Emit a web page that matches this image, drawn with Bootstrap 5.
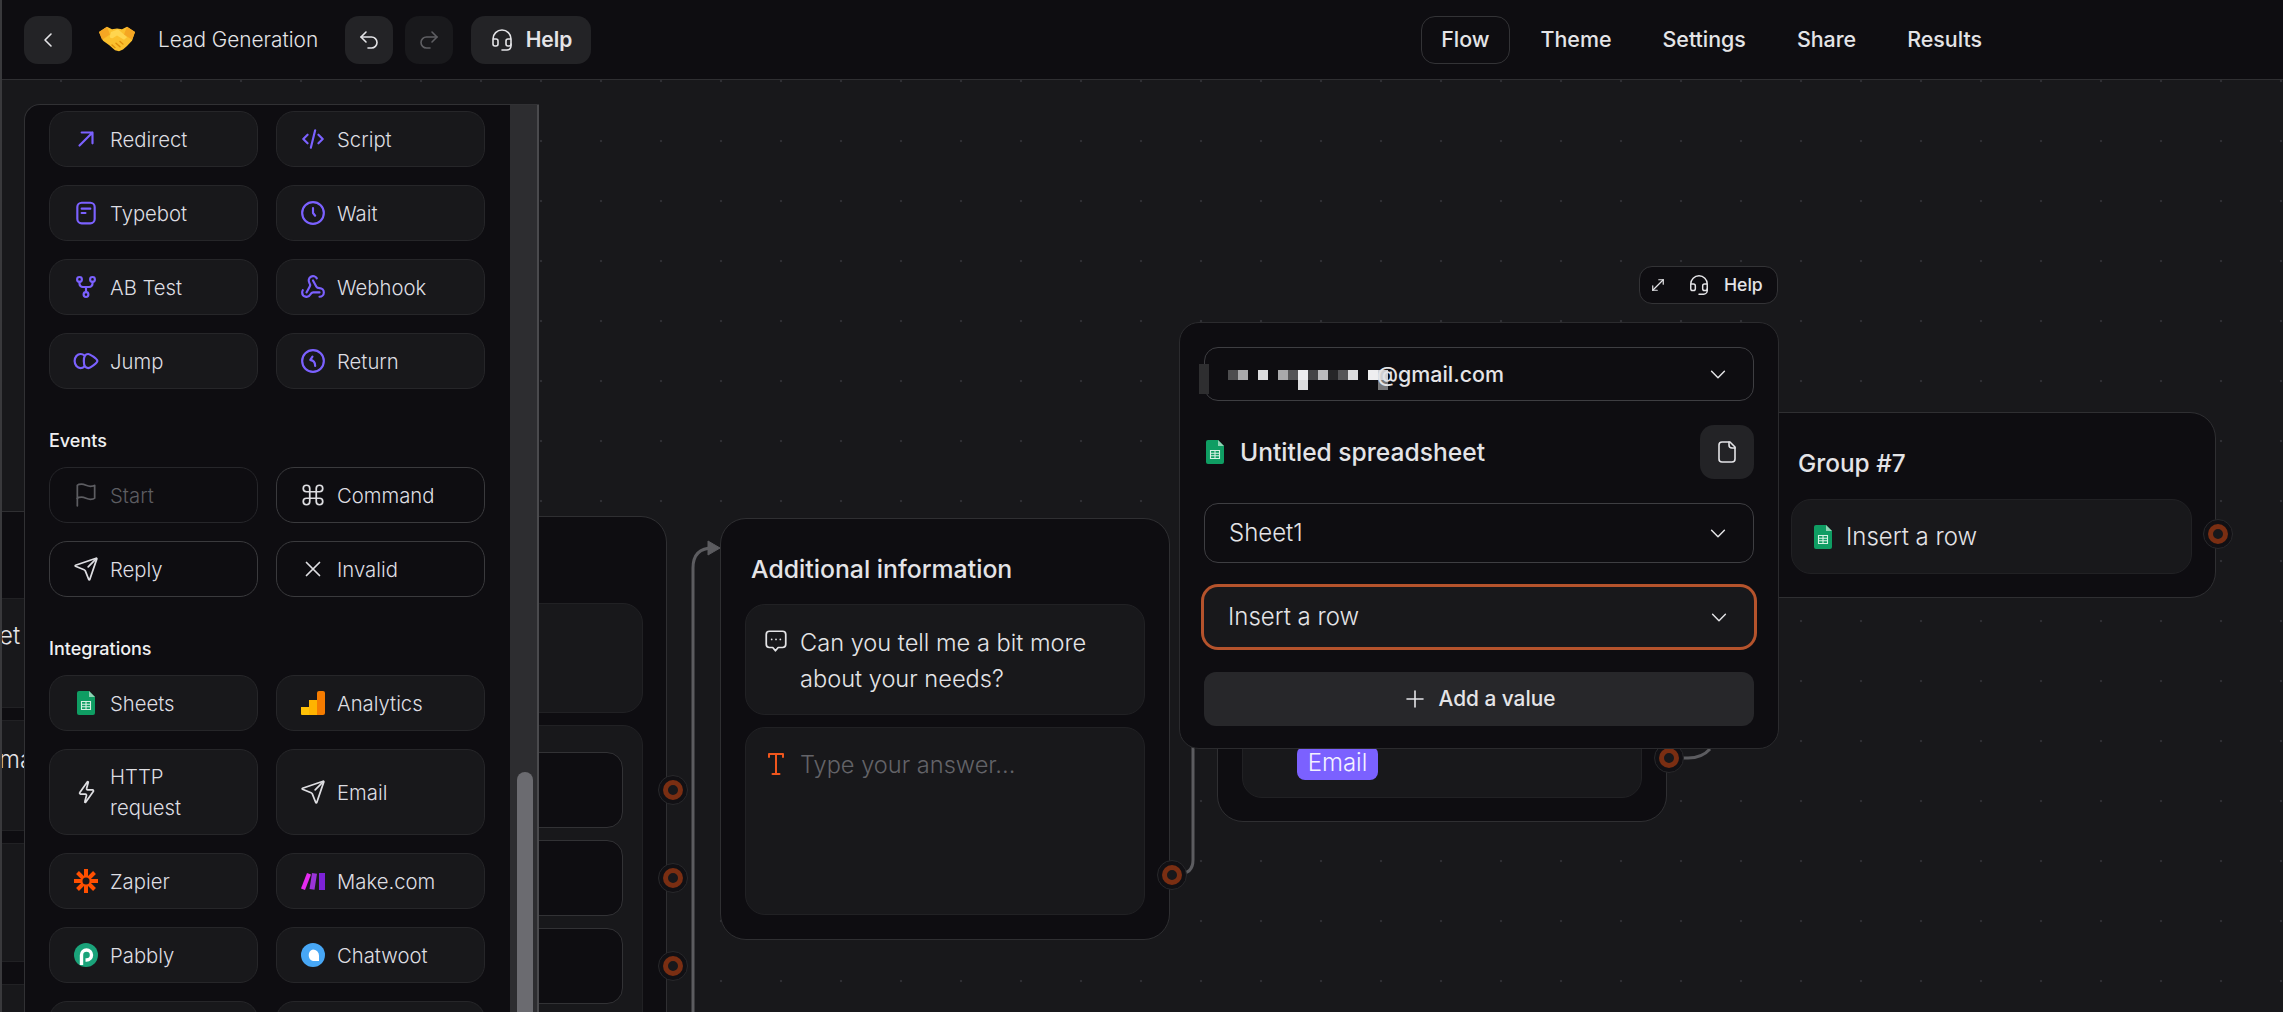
<!DOCTYPE html>
<html lang="en">
<head>
<meta charset="utf-8">
<title>Lead Generation</title>
<link href="https://cdn.jsdelivr.net/npm/bootstrap@5.3.0/dist/css/bootstrap.min.css" rel="stylesheet">
<style>
html,body{height:100%;margin:0;overflow:hidden;background:#18181b}
body{font-family:"Inter","Liberation Sans",sans-serif;color:#e4e4e7;font-size:24px;font-weight:300;line-height:1.5}
.ico{width:24px;height:24px;fill:none;stroke:currentColor;stroke-width:1.6;stroke-linecap:round;stroke-linejoin:round;flex:none}
.pur{color:#7b61ff;stroke-width:2}
.shell{height:1012px;position:relative;overflow:hidden}
.topbar{height:80px;background:#0e0d11;border-bottom:1px solid #2f2f32;padding-left:24px}
.sq-btn{width:48px;height:48px;border-radius:14px;background:#232326;border:0;color:#e4e4e7;display:flex;align-items:center;justify-content:center;padding:0}
.sq-off{background:#19191c;color:#5f5f63}
.emoji{width:38px;height:28px;margin-left:26px;margin-bottom:4px;flex:none}
.ttl{margin-left:22px;margin-right:24px;font-size:20.8px;width:163px;white-space:nowrap}
.gap-a{margin-right:12px}
.help-btn{width:120px;height:48px;border-radius:14px;background:#232326;margin-left:6px;font-weight:600;font-size:21px;gap:12px}
.tabs{margin-left:auto;margin-right:281px;gap:11px}
.tabx{height:48px;padding:0 19px;border-radius:14px;border:1px solid transparent;font-weight:500;font-size:21.4px;display:flex;align-items:center}
.tab-on{border-color:#333336}
.canvas{position:absolute;left:0;right:0;top:80px;bottom:0;background-color:#18181b;background-image:radial-gradient(circle,#2f2f34 1.1px,transparent 1.6px);background-size:60px 60px;background-position:31px -29px}
.strip{position:absolute;left:0;top:-80px;bottom:0;width:2px;background:#39393c;z-index:9}
.wires{position:absolute;left:0;top:0;width:2283px;height:932px}
.grp{position:absolute;background:#0e0d11;border:1px solid #2f2f32;border-radius:26px}
.blk{position:absolute;background:#18181b;border:1px solid #212124;border-radius:20px}
.port{position:absolute;width:30px;height:30px;border-radius:50%;background:#111014;border:1px solid #28282b;display:flex;align-items:center;justify-content:center}
.port::after{content:"";width:20px;height:20px;border-radius:50%;border:5px solid #7a2e12;background:#18181b}
.g-back{left:-40px;top:431px;width:66px;height:600px;overflow:hidden;border-radius:0;border-left:0;border-right:0;border-bottom:0}
.gb1{left:0;top:86px;width:280px;height:110px;border-radius:0}
.gb2{left:0;top:208px;width:280px;height:111px;border-radius:0}
.gb3{left:0;top:331px;width:280px;height:119px;border-radius:0}
.gb4{left:0;top:472px;width:280px;height:120px;border-radius:0}
.clip-t{position:absolute;left:38px;white-space:nowrap;font-size:24px}
.ct1{top:19px}.ct2{top:21px}
.g-main{left:300px;top:436px;width:367px;height:600px}
.gm1{left:-1px;top:86px;width:343px;height:110px}
.gm2{left:-1px;top:208px;width:343px;height:400px}
.it1,.it2,.it3{position:absolute;left:-1px;width:323px;height:76px;background:#0e0d11;border:1px solid #323235;border-radius:16px}
.it1{top:26px}.it2{top:114px}.it3{top:202px}
.port.p1{left:658px;top:695px}.port.p2{left:658px;top:783px}.port.p3{left:658px;top:871px}
.port.p4{left:1157px;top:780px}.port.p5{left:1654px;top:663px}.port.p6{left:2203px;top:439px}
.g-add{left:720px;top:438px;width:450px;height:422px}
.g-h{font-size:24.4px;font-weight:500;white-space:nowrap;line-height:32px}
.g-add .g-h{position:absolute;left:30px;top:34px;font-size:24.8px}
.ga1{left:24px;top:85px;width:400px;height:111px}
.ga2{left:24px;top:208px;width:400px;height:188px}
.ga1 p{position:absolute;left:54px;top:20px;margin:0;font-size:23.6px;line-height:36px;width:330px;white-space:nowrap}
.ga2 p{position:absolute;left:54px;top:19px;margin:0;font-size:23.6px;line-height:36px;color:#636368}
.ic-chat{position:absolute;left:17px;top:23px;width:26px;height:26px}
.ic-t{position:absolute;left:18px;top:23px;width:24px;height:26px;color:#f0561d;stroke-width:2}
.g-mail{left:1217px;top:480px;width:450px;height:262px}
.gm-b{left:24px;top:100px;width:400px;height:137px}
.chip{position:absolute;left:54px;top:84px;width:81px;height:34px;border-radius:8px;background:#7b61ff;color:#f4f1ff;font-size:24px;display:flex;align-items:center;justify-content:center;line-height:1}
.g-seven{left:1700px;top:332px;width:516px;height:186px}
.g-seven .g-h{position:absolute;left:97px;top:34px}
.gs-b{left:90px;top:86px;width:401px;height:75px;display:flex;align-items:center;padding-left:22px;gap:14px;font-size:24px}
.sheet-i{width:18px;height:24px;flex:none}
.pop{position:absolute;left:1179px;top:242px;width:600px;height:427px;background:#0e0d11;border:1px solid #2b2b2e;border-radius:20px;padding:24px 24px 0;z-index:5}
.sel{height:60px;border:1px solid #3e3e42;border-radius:14px;padding:0 24px;margin-bottom:24px;background:#0e0d11;position:relative}
.sel-a{height:54px;font-weight:500;font-size:21.4px}
.sel-b{background:#18181b;border:0;box-shadow:0 0 0 3px #b5532c;margin-bottom:25px}
.chev{width:22px;height:22px;margin-left:auto;margin-right:0}
.pix{position:absolute;left:-6px;top:16px;width:190px;height:30px}
.mail-t{position:absolute;left:172px;top:10px}
.sheet-row{height:54px;margin-bottom:24px}
.sheet-row .sheet-i{margin-left:2px;margin-right:16px}
.sheet-t{font-size:24.6px;font-weight:500}
.doc-btn{width:54px;height:54px;border-radius:14px;background:#232326;margin-left:auto;display:flex;align-items:center;justify-content:center}
.add-v{height:54px;border-radius:12px;background:#27272a;font-weight:500;gap:12px;font-size:20.8px}
.tool{position:absolute;left:1639px;top:186px;width:139px;height:38px;background:#0e0d11;border:1px solid #333336;border-radius:13px;font-size:17.6px;font-weight:500;padding-left:9px;z-index:5}
.tool .ico{width:18px;height:18px}
.tool .hs{width:22px;height:22px;margin-left:21px;margin-right:14px}
.side{position:absolute;left:24px;top:24px;bottom:-2px;width:515px;background:#0e0d11;border:1px solid #313134;border-right:0;border-radius:16px 0 0 0;z-index:6;overflow:hidden;display:flex}
.side-body{width:460px;flex:none;padding:6px 0 0 24px;overflow:hidden}
.btn-grid{--bs-gutter-x:18px;--bs-gutter-y:18px}
.blox{height:56px;background:#18181b;border:1px solid #262629;border-radius:18px;display:flex;align-items:center;padding-left:21px;gap:9px;font-size:20.3px;color:#dedee2;line-height:31px}
.blox .ico{width:26px;height:26px;margin:0 2px}
.blox .logo{width:24px;height:24px;margin:0 3px;flex:none}
.blox .sheet-i{margin:0 6px}
.blox-tall{height:86px}
.blox-line{background:#0e0d11;border-color:#3a3a3d}
.blox-off{background:#0e0d11;color:#5d5d62;border-color:#26262a}
.lbl{font-size:18px;font-weight:500;line-height:24px;margin:40px 0 14px;color:#f0f0f2}
.rail{position:absolute;right:0;top:0;bottom:0;width:29px;background:#2d2d30;border-right:2px solid #4a4a4d}
.thumb{position:absolute;left:7px;top:667px;width:16px;height:400px;border-radius:8px 8px 0 0;background:#6b6b70}
</style>
</head>
<body>
<div class="shell">
  <header class="topbar d-flex align-items-center">
    <button class="sq-btn" type="button" aria-label="Back"><svg class="ico" viewBox="0 0 24 24"><path d="M15 6l-6 6 6 6"/></svg></button>
    <svg class="emoji" viewBox="0 0 38 32" preserveAspectRatio="none"><path d="M1 9 9 3l5 3 5-1 5 1 5-3 8 6-3 10-5 6-4 4-4 2-4-1-6-6-6-5z" fill="#fbc02d"/><path d="M1 9 9 3l3 9-8 6zM37 9 29 3l-3 9 8 6z" fill="#f5a623"/><path d="M13 9l7-3 9 9-3 3-7-5-4 3c-2 1-4-1-3-3z" fill="#ffd54f"/><path d="M14 24l3 3M18 22l4 4M22 20l3 3" stroke="#e08e0b" stroke-width="1.4" fill="none" stroke-linecap="round"/></svg>
    <span class="ttl">Lead Generation</span>
    <button class="sq-btn gap-a" type="button" aria-label="Undo"><svg class="ico" viewBox="0 0 24 24"><path d="M9 14 4 9l5-5"/><path d="M4 9h10.500a5.500 5.500 0 0 1 0 11H11"/></svg></button>
    <button class="sq-btn sq-off gap-a" type="button" aria-label="Redo"><svg class="ico" viewBox="0 0 24 24"><path d="m15 14 5-5-5-5"/><path d="M20 9H9.500a5.500 5.500 0 0 0 0 11H13"/></svg></button>
    <div class="help-btn d-flex align-items-center justify-content-center"><svg class="ico" viewBox="0 0 24 24"><path d="M3 11h3a2 2 0 0 1 2 2v3a2 2 0 0 1-2 2H5a2 2 0 0 1-2-2v-5Zm0 0a9 9 0 1 1 18 0m0 0v5a2 2 0 0 1-2 2h-1a2 2 0 0 1-2-2v-3a2 2 0 0 1 2-2h3Z"/><path d="M21 16v2a4 4 0 0 1-4 4h-5"/></svg><span>Help</span></div>
    <nav class="tabs d-flex">
      <div class="tabx tab-on">Flow</div><div class="tabx">Theme</div><div class="tabx">Settings</div><div class="tabx">Share</div><div class="tabx">Results</div>
    </nav>
  </header>

  <main class="canvas">
    <svg class="wires" viewBox="0 80 2283 932" fill="none" stroke="#5c5c60" stroke-width="3"><path d="M693 1012V568q0-20 20-20h2"/><path d="M708 541l12 7-12 7z" fill="#5c5c60" stroke-width="1"/><path d="M1178 874q15 0 15-14V740"/><path d="M1682 758h6q14 0 22-9"/></svg>

    <div class="grp g-back">
      <div class="blk gb1"><span class="clip-t ct1">et y</span></div>
      <div class="blk gb2"><span class="clip-t ct2">ma</span></div>
      <div class="blk gb3"></div>
      <div class="blk gb4"></div>
    </div>

    <div class="grp g-main">
      <div class="blk gm1"></div>
      <div class="blk gm2"><div class="it1"></div><div class="it2"></div><div class="it3"></div></div>
    </div>
    <div class="port p1"></div><div class="port p2"></div><div class="port p3"></div>

    <div class="grp g-add">
      <div class="g-h">Additional information</div>
      <div class="blk ga1"><svg class="ico ic-chat" viewBox="0 0 24 24"><path d="M6 3h12a3 3 0 0 1 3 3v9a3 3 0 0 1-3 3h-4l-2.500 3-2.500-3H6a3 3 0 0 1-3-3V6a3 3 0 0 1 3-3z"/><path d="M8 10.500h.01M12 10.500h.01M16 10.500h.01"/></svg><p>Can you tell me a bit more<br>about your needs?</p></div>
      <div class="blk ga2"><svg class="ico ic-t" viewBox="0 0 24 26"><path d="M5 6V3h14v3M12 3v20M8.500 23h7"/></svg><p>Type your answer...</p></div>
    </div>
    <div class="port p4"></div>

    <div class="grp g-mail"><div class="blk gm-b"><div class="chip">Email</div></div></div>
    <div class="port p5"></div>

    <div class="grp g-seven">
      <div class="g-h">Group #7</div>
      <div class="blk gs-b"><svg class="sheet-i" viewBox="0 0 18 24"><path d="M2 0h10l6 6v16a2 2 0 0 1-2 2H2a2 2 0 0 1-2-2V2a2 2 0 0 1 2-2z" fill="#0f9d63"/><path d="M12 0l6 6h-6z" fill="#8fd3b4"/><path d="M4.500 10.500h9v8h-9zM4.500 13.200h9M4.500 15.800h9M9 10.500v8" fill="none" stroke="#d6f1e3" stroke-width="1.100"/></svg><span>Insert a row</span></div>
    </div>
    <div class="port p6"></div>

    <div class="tool d-flex align-items-center">
      <svg class="ico" viewBox="0 0 24 24"><path d="M11 19H5v-6"/><path d="M13 5h6v6"/><path d="M19 5 5 19"/></svg>
      <svg class="ico hs" viewBox="0 0 24 24"><path d="M3 11h3a2 2 0 0 1 2 2v3a2 2 0 0 1-2 2H5a2 2 0 0 1-2-2v-5Zm0 0a9 9 0 1 1 18 0m0 0v5a2 2 0 0 1-2 2h-1a2 2 0 0 1-2-2v-3a2 2 0 0 1 2-2h3Z"/><path d="M21 16v2a4 4 0 0 1-4 4h-5"/></svg>
      <span>Help</span>
    </div>

    <section class="pop">
      <div class="sel sel-a d-flex align-items-center">
        <svg class="pix" viewBox="0 0 190 30"><rect x="0" y="0" width="10" height="30" fill="#2e2e30"/><g transform="translate(4)"><rect x="25" y="6" width="10" height="10" fill="#4d4d4f"/><rect x="35" y="6" width="10" height="10" fill="#a9a9ab"/><rect x="55" y="6" width="10" height="10" fill="#dcdcde"/><rect x="75" y="6" width="10" height="10" fill="#a9a9ab"/><rect x="85" y="6" width="10" height="10" fill="#555557"/><rect x="95" y="6" width="10" height="10" fill="#eeeef0"/><rect x="105" y="6" width="10" height="10" fill="#444446"/><rect x="115" y="6" width="10" height="10" fill="#bbbbbd"/><rect x="125" y="6" width="10" height="10" fill="#262628"/><rect x="135" y="6" width="10" height="10" fill="#555557"/><rect x="145" y="6" width="10" height="10" fill="#dcdcde"/><rect x="165" y="6" width="10" height="10" fill="#eeeef0"/><rect x="175" y="6" width="10" height="10" fill="#cfcfd1"/><rect x="95" y="16" width="10" height="10" fill="#dcdcde"/><rect x="175" y="16" width="10" height="10" fill="#777779"/></g></svg>
        <span class="mail-t">@gmail.com</span>
        <svg class="ico chev" viewBox="0 0 24 24"><path d="m5 9 7 7 7-7"/></svg>
      </div>
      <div class="sheet-row d-flex align-items-center">
        <svg class="sheet-i" viewBox="0 0 18 24"><path d="M2 0h10l6 6v16a2 2 0 0 1-2 2H2a2 2 0 0 1-2-2V2a2 2 0 0 1 2-2z" fill="#0f9d63"/><path d="M12 0l6 6h-6z" fill="#8fd3b4"/><path d="M4.500 10.500h9v8h-9zM4.500 13.200h9M4.500 15.800h9M9 10.500v8" fill="none" stroke="#d6f1e3" stroke-width="1.100"/></svg>
        <span class="sheet-t">Untitled spreadsheet</span>
        <div class="doc-btn"><svg class="ico" viewBox="0 0 24 24"><path d="M15 2H7a3 3 0 0 0-3 3v14a3 3 0 0 0 3 3h10a3 3 0 0 0 3-3V7z"/><path d="M14 2v3a3 3 0 0 0 3 3h3"/></svg></div>
      </div>
      <div class="sel d-flex align-items-center"><span>Sheet1</span><svg class="ico chev" viewBox="0 0 24 24"><path d="m5 9 7 7 7-7"/></svg></div>
      <div class="sel sel-b d-flex align-items-center"><span>Insert a row</span><svg class="ico chev" viewBox="0 0 24 24"><path d="m5 9 7 7 7-7"/></svg></div>
      <div class="add-v d-flex align-items-center justify-content-center"><svg class="ico" viewBox="0 0 24 24"><path d="M12 4v16M4 12h16"/></svg><span>Add a value</span></div>
    </section>

    <aside class="side">
      <div class="side-body">
        <div class="row btn-grid">
          <div class="col-6"><div class="blox"><svg class="ico pur" viewBox="0 0 24 24"><path d="M6 18 18 6M8 6h10v10"/></svg>Redirect</div></div>
          <div class="col-6"><div class="blox"><svg class="ico pur" viewBox="0 0 24 24"><path d="m17 16 4-4-4-4M7 8l-4 4 4 4M14 4l-4 16"/></svg>Script</div></div>
          <div class="col-6"><div class="blox"><svg class="ico pur" viewBox="0 0 24 24"><rect x="4" y="2.500" width="16" height="19" rx="4"/><path d="M8 8h8M8 12h3.500"/></svg>Typebot</div></div>
          <div class="col-6"><div class="blox"><svg class="ico pur" viewBox="0 0 24 24"><circle cx="12" cy="12" r="10"/><path d="M12 7.500V12l2 2.500"/></svg>Wait</div></div>
          <div class="col-6"><div class="blox"><svg class="ico pur" viewBox="0 0 24 24"><circle cx="12" cy="19" r="2.200"/><circle cx="6" cy="5" r="2.200"/><circle cx="18" cy="5" r="2.200"/><path d="M18 7.200V9a3 3 0 0 1-3 3H9a3 3 0 0 1-3-3V7.200M12 12v4.800"/></svg>AB Test</div></div>
          <div class="col-6"><div class="blox"><svg class="ico pur" viewBox="0 0 24 24"><path d="M18 16.980h-5.990c-1.100 0-1.950.94-2.480 1.900A4 4 0 0 1 2 17c.01-.7.2-1.400.57-2"/><path d="m6 17 3.130-5.780c.53-.97.1-2.180-.5-3.100a4 4 0 1 1 6.890-4.060"/><path d="m12 6 3.130 5.730C15.660 12.700 16.900 13 18 13a4 4 0 0 1 0 8"/></svg>Webhook</div></div>
          <div class="col-6"><div class="blox"><svg class="ico pur" viewBox="0 0 24 24"><path d="M10.500 7C9.500 6 8.500 5.500 7 5.500c-3 0-5.500 3-5.500 6.500s2.500 6.500 5.500 6.500c1.500 0 2.500-.5 3.500-1.500"/><path d="M14 5.500c1.500 0 8.500 4.500 8.500 6.500s-7 6.500-8.500 6.500c-2.500 0-4-2.500-4-6.500s1.500-6.500 4-6.500z"/></svg>Jump</div></div>
          <div class="col-6"><div class="blox"><svg class="ico pur" viewBox="0 0 24 24"><circle cx="12" cy="12" r="10"/><path d="M14 16.500c0-3.500-1-5-4.500-5.500M9.500 11 11.500 8M9.500 11l2.500 1"/></svg>Return</div></div>
        </div>

        <div class="lbl">Events</div>
        <div class="row btn-grid">
          <div class="col-6"><div class="blox blox-off"><svg class="ico" viewBox="0 0 24 24"><path d="M4 15s1-1 4-1 5 2 8 2 4-1 4-1V3s-1 1-4 1-5-2-8-2-4 1-4 1z"/><path d="M4 22v-7"/></svg>Start</div></div>
          <div class="col-6"><div class="blox blox-line"><svg class="ico" viewBox="0 0 24 24"><path d="M15 6v12a3 3 0 1 0 3-3H6a3 3 0 1 0 3 3V6a3 3 0 1 0-3 3h12a3 3 0 1 0-3-3"/></svg>Command</div></div>
          <div class="col-6"><div class="blox blox-line"><svg class="ico" viewBox="0 0 24 24"><path d="M14.536 21.686a.5.5 0 0 0 .937-.024l6.500-19a.496.496 0 0 0-.635-.635l-19 6.500a.5.5 0 0 0-.024.937l7.930 3.180a2 2 0 0 1 1.112 1.110z"/><path d="M21.500 2.500 14 10"/></svg>Reply</div></div>
          <div class="col-6"><div class="blox blox-line"><svg class="ico" viewBox="0 0 24 24"><path d="M18 6 6 18M6 6l12 12"/></svg>Invalid</div></div>
        </div>

        <div class="lbl">Integrations</div>
        <div class="row btn-grid">
          <div class="col-6"><div class="blox"><svg class="sheet-i" viewBox="0 0 18 24"><path d="M2 0h10l6 6v16a2 2 0 0 1-2 2H2a2 2 0 0 1-2-2V2a2 2 0 0 1 2-2z" fill="#0f9d63"/><path d="M12 0l6 6h-6z" fill="#8fd3b4"/><path d="M4.500 10.500h9v8h-9zM4.500 13.200h9M4.500 15.800h9M9 10.500v8" fill="none" stroke="#d6f1e3" stroke-width="1.100"/></svg>Sheets</div></div>
          <div class="col-6"><div class="blox"><svg class="logo" viewBox="0 0 24 24"><path d="M0 16h8v8H1a1 1 0 0 1-1-1z" fill="#ffc107"/><path d="M8 9h8v15H8z" fill="#ffb300"/><path d="M16 2a2 2 0 0 1 2-2h4a2 2 0 0 1 2 2v20a2 2 0 0 1-2 2h-6z" fill="#f57c00"/></svg>Analytics</div></div>
          <div class="col-6"><div class="blox blox-tall"><svg class="ico" viewBox="0 0 24 24"><path d="M7 14a1 1 0 0 1-.7-1.600l7-9.800c.3-.4 1-.1.8.4l-1.500 5.600a1 1 0 0 0 .9 1.400h4.500a1 1 0 0 1 .7 1.600l-7 9.800c-.3.4-1 .1-.8-.4l1.500-5.600a1 1 0 0 0-.9-1.400z"/></svg><span>HTTP<br>request</span></div></div>
          <div class="col-6"><div class="blox blox-tall"><svg class="ico" viewBox="0 0 24 24"><path d="M14.536 21.686a.5.5 0 0 0 .937-.024l6.500-19a.496.496 0 0 0-.635-.635l-19 6.500a.5.5 0 0 0-.024.937l7.930 3.180a2 2 0 0 1 1.112 1.110z"/><path d="M21.500 2.500 14 10"/></svg>Email</div></div>
          <div class="col-6"><div class="blox"><svg class="logo" viewBox="0 0 24 24"><path d="M12 0v24M0 12h24M3.500 3.500l17 17M20.500 3.500l-17 17" stroke="#ff4f00" stroke-width="4"/><circle cx="12" cy="12" r="3.500" fill="#18181b"/></svg>Zapier</div></div>
          <div class="col-6"><div class="blox"><svg class="logo" viewBox="0 0 24 24"><path d="M0 19.500 6 4l4 1.600-6 15.500z" fill="#e52bf0"/><path d="M8.500 20 11 4l5 .8-2.500 16z" fill="#9a34d9"/><path d="M18 4h6v17h-6z" fill="#7d22d8"/></svg>Make.com</div></div>
          <div class="col-6"><div class="blox"><svg class="logo" viewBox="0 0 24 24"><circle cx="12" cy="12" r="12" fill="#1aa37a"/><path d="M7.500 22V12a5 5 0 1 1 5 5h-1" fill="none" stroke="#fff" stroke-width="3.400"/></svg>Pabbly</div></div>
          <div class="col-6"><div class="blox"><svg class="logo" viewBox="0 0 24 24"><circle cx="12" cy="12" r="12" fill="#47a7f6"/><path d="M12 6.500a6 6 0 0 1 6 6V18h-6a6 6 0 0 1 0-11.500z" fill="#fff"/></svg>Chatwoot</div></div>
          <div class="col-6"><div class="blox"></div></div>
          <div class="col-6"><div class="blox"></div></div>
        </div>
      </div>
      <div class="rail"><div class="thumb"></div></div>
    </aside>
    <div class="strip"></div>
  </main>
</div>
<script src="https://cdn.jsdelivr.net/npm/bootstrap@5.3.0/dist/js/bootstrap.bundle.min.js"></script>
</body>
</html>
